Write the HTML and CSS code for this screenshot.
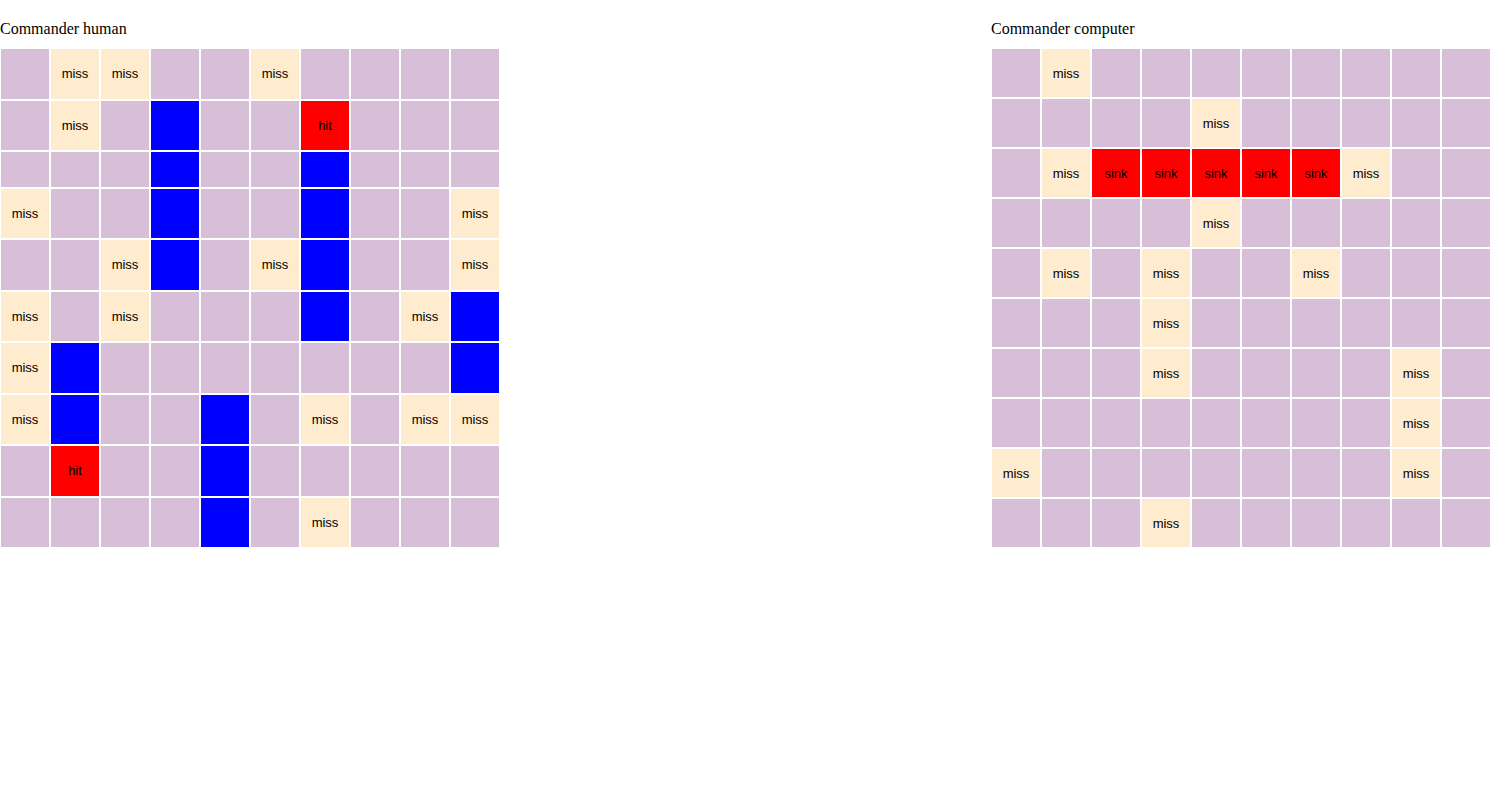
FILE: index.html
```html
<!DOCTYPE html>
<html lang="en">
<head>
    <meta charset="UTF-8">
    <meta name="viewport" content="width=device-width, initial-scale=1.0">
    <title>Battleship</title>
    <link rel="stylesheet" href="styles.css">
</head>
<body>
    <div class="game">
        <div class="board">
            <div class="commander">Commander human</div>
            <div class="grid" id="human"></div>
        </div>
        <div class="board">
            <div class="commander">Commander computer</div>
            <div class="grid" id="computer"></div>
        </div>
    </div>

    <script>
        // . empty, s ship, m miss, h hit, k sink
        const humanBoard = [
            '.mm..m....',
            '.m.s..h...',
            '...s..s...',
            'm..s..s..m',
            '..ms.ms..m',
            'm.m...s.ms',
            'ms.......s',
            'ms..s.m.mm',
            '.h..s.....',
            '....s.m...'
        ];
        const computerBoard = [
            '.m........',
            '....m.....',
            '.mkkkkkm..',
            '....m.....',
            '.m.m..m...',
            '...m......',
            '...m....m.',
            '........m.',
            'm.......m.',
            '...m......'
        ];

        const states = {
            '.': ['empty', ''],
            's': ['ship', ''],
            'm': ['miss', 'miss'],
            'h': ['hit', 'hit'],
            'k': ['hit', 'sink']
        };

        function drawBoard(id, rows) {
            let grid = document.getElementById(id);
            rows.forEach(function(row) {
                for (let c of row) {
                    let cell = document.createElement('div');
                    cell.className = 'cell ' + states[c][0];
                    cell.textContent = states[c][1];
                    grid.appendChild(cell);
                }
            });
        }

        drawBoard('human', humanBoard);
        drawBoard('computer', computerBoard);
    </script>
</body>
</html>
```

FILE: styles.css
```css
body {
    margin: 0;
    font-family: "Liberation Serif", "Times New Roman", serif;
    font-size: 16px;
}

.game {
    display: flex;
    justify-content: space-between;
}

.commander {
    margin: 20px 0 10px;
}

.grid {
    display: grid;
    grid-template-columns: repeat(10, 50px);
    height: 500px;
}

.cell {
    display: flex;
    align-items: center;
    justify-content: center;
    border: 1px solid #fff;
    box-sizing: border-box;
    font-family: "Liberation Sans", Arial, sans-serif;
    font-size: 13px;
    color: #000;
    background-color: thistle;
}

.cell.miss {
    background-color: blanchedalmond;
}

.cell.ship {
    background-color: blue;
}

.cell.hit {
    background-color: red;
}
```
